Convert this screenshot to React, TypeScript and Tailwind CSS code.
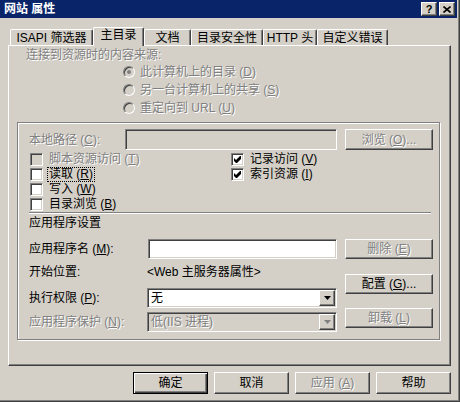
import React from 'react';

const raised =
  'border border-t-white border-l-white border-r-[#404040] border-b-[#404040] shadow-[inset_-1px_-1px_0_#808080]';
const sunken =
  'border border-t-[#808080] border-l-[#808080] border-r-white border-b-white shadow-[inset_1px_1px_0_#404040,inset_-1px_-1px_0_#d4d0c8]';
const grayText = 'text-[#808080] [text-shadow:1px_1px_0_#ffffff]';

// mnemonic letter, underlined
const M = ({ c }: { c: string }) => <span className="underline underline-offset-[1px]">{c}</span>;

const TitleBtn = ({ children, className = '' }: { children: React.ReactNode; className?: string }) => (
  <div
    className={`w-[16px] h-[14px] bg-[#d4d0c8] flex items-center justify-center ${raised} ${className}`}
  >
    {children}
  </div>
);

const Tab = ({ label, w, active }: { label: string; w: string; active?: boolean }) =>
  active ? (
    <div
      className={`${w} relative -mb-px h-[19px] bg-[#d4d0c8] rounded-t-[2px] border-t border-l border-r border-t-white border-l-white border-r-[#404040] shadow-[inset_-1px_0_0_#808080] text-center leading-[14px]`}
    >
      {label}
    </div>
  ) : (
    <div
      className={`${w} h-[16px] rounded-t-[2px] border-t border-l border-r border-t-white border-l-white border-r-[#404040] shadow-[inset_-1px_0_0_#808080] text-center leading-[14px] pt-px`}
    >
      {label}
    </div>
  );

const Btn = ({
  children,
  disabled,
  isDefault,
  className = '',
}: {
  children: React.ReactNode;
  disabled?: boolean;
  isDefault?: boolean;
  className?: string;
}) => (
  <div
    className={`bg-[#d4d0c8] flex items-center justify-center ${
      isDefault
        ? 'border border-black shadow-[inset_1px_1px_0_#ffffff,inset_-1px_-1px_0_#404040,inset_-2px_-2px_0_#808080]'
        : raised
    } ${disabled ? grayText : ''} ${className}`}
  >
    {children}
  </div>
);

const Radio = ({ checked }: { checked?: boolean }) => (
  <span
    className={`w-[12px] h-[12px] shrink-0 rounded-full bg-[#d4d0c8] flex items-center justify-center ${sunken}`}
  >
    {checked && <span className="w-[4px] h-[4px] rounded-full bg-[#808080]" />}
  </span>
);

const Check = ({ checked, disabled }: { checked?: boolean; disabled?: boolean }) => (
  <span
    className={`w-[13px] h-[13px] shrink-0 flex items-center justify-center ${sunken} ${
      disabled ? 'bg-[#d4d0c8]' : 'bg-white'
    }`}
  >
    {checked && (
      <svg width="7" height="7" viewBox="0 0 7 7">
        <polygon points="0,2 2,4 6,0 7,0 7,3 3,7 2,7 0,5" fill="#000" />
      </svg>
    )}
  </span>
);

const CheckRow = ({
  checked,
  disabled,
  focused,
  children,
}: {
  checked?: boolean;
  disabled?: boolean;
  focused?: boolean;
  children: React.ReactNode;
}) => (
  <div className="h-[15px] flex items-center gap-[4px]">
    <Check checked={checked} disabled={disabled} />
    <span
      className={`leading-[13px] border px-px ${focused ? 'border-dotted border-black' : 'border-transparent'} ${
        disabled ? grayText : ''
      }`}
    >
      {children}
    </span>
  </div>
);

const Combo = ({ value, disabled, w }: { value: string; disabled?: boolean; w: string }) => (
  <div className={`${w} h-[20px] p-px flex items-center ${sunken} ${disabled ? 'bg-[#d4d0c8]' : 'bg-white'}`}>
    <span className={`flex-1 pl-[2px] leading-[16px] ${disabled ? grayText : ''}`}>{value}</span>
    <span className={`w-[16px] h-[16px] bg-[#d4d0c8] flex items-center justify-center ${raised}`}>
      <svg width="7" height="4" viewBox="0 0 7 4">
        <polygon points="0,0 7,0 3.5,4" fill={disabled ? '#808080' : '#000'} />
      </svg>
    </span>
  </div>
);

const App = () => {
  return (
    <div className="w-[460px] h-[402px] overflow-hidden bg-[#d4d0c8] border-r border-b border-[#404040] text-[12px] leading-[16px] text-black [font-family:'Liberation_Sans','Noto_Sans_CJK_SC',sans-serif]">
      <div className="h-full flex flex-col border-r border-b border-[#808080] pr-px">
        {/* title bar */}
        <div className="h-[18px] shrink-0 bg-[#0a246a] flex items-center pl-[4px] pr-[2px]">
          <span className="flex-1 text-white font-bold">网站 属性</span>
          <TitleBtn>
            <span className="font-bold text-[11px] leading-[11px]">?</span>
          </TitleBtn>
          <TitleBtn className="ml-[2px]">
            <svg width="8" height="7" viewBox="0 0 8 7">
              <path d="M0.5 0.5 L7.5 6.5 M7.5 0.5 L0.5 6.5" stroke="#000" strokeWidth="1.6" />
            </svg>
          </TitleBtn>
        </div>

        {/* tabs */}
        <div className="relative z-10 mt-[9px] ml-[10px] h-[18px] flex items-end">
          <Tab label="ISAPI 筛选器" w="w-[83px]" />
          <Tab label="主目录" w="w-[51px]" active />
          <Tab label="文档" w="w-[47px]" />
          <Tab label="目录安全性" w="w-[72px]" />
          <Tab label="HTTP 头" w="w-[54px]" />
          <Tab label="自定义错误" w="w-[71px]" />
        </div>

        {/* tab page */}
        <div className="ml-[8px] w-[443px] h-[321px] shrink-0 flex flex-col border border-t-white border-l-white border-r-[#404040] border-b-[#404040] shadow-[inset_-1px_-1px_0_#808080]">
          <div className={`mt-px pl-[17px] h-[16px] ${grayText}`}>连接到资源时的内容来源:</div>
          <div className="pl-[114px] flex flex-col">
            <div className="h-[18px] flex items-center gap-[5px]">
              <Radio checked />
              <span className={grayText}>
                此计算机上的目录 (<M c="D" />)
              </span>
            </div>
            <div className="h-[18px] flex items-center gap-[5px]">
              <Radio />
              <span className={grayText}>
                另一台计算机上的共享 (<M c="S" />)
              </span>
            </div>
            <div className="h-[18px] flex items-center gap-[5px]">
              <Radio />
              <span className={grayText}>
                重定向到 URL (<M c="U" />)
              </span>
            </div>
          </div>

          {/* group box */}
          <div className="mt-[5px] ml-[8px] w-[423px] h-[218px] flex flex-col border border-[#808080] shadow-[inset_1px_1px_0_#ffffff,1px_1px_0_#ffffff]">
            <div className="mt-[6px] pl-[11px] h-[21px] flex items-center">
              <span className={`w-[96px] ${grayText}`}>
                本地路径 (<M c="C" />):
              </span>
              <div className={`w-[212px] h-[21px] bg-[#d4d0c8] ${sunken}`} />
              <Btn disabled className="ml-[8px] w-[88px] h-[21px]">
                浏览 (<M c="O" />)...
              </Btn>
            </div>

            <div className="mt-[2px] pl-[12px] flex">
              <div className="w-[201px] flex flex-col">
                <CheckRow disabled>
                  脚本资源访问 (<M c="T" />)
                </CheckRow>
                <CheckRow focused>
                  读取 (<M c="R" />)
                </CheckRow>
                <CheckRow>
                  写入 (<M c="W" />)
                </CheckRow>
                <CheckRow>
                  目录浏览 (<M c="B" />)
                </CheckRow>
              </div>
              <div className="flex flex-col">
                <CheckRow checked>
                  记录访问 (<M c="V" />)
                </CheckRow>
                <CheckRow checked>
                  索引资源 (<M c="I" />)
                </CheckRow>
              </div>
            </div>

            <div className="ml-[11px] w-[402px] h-[2px] border-t border-t-[#808080] border-b border-b-white" />
            <div className="mt-px pl-[11px] h-[16px]">应用程序设置</div>

            <div className="mt-[8px] pl-[11px] h-[20px] flex items-center">
              <span className="w-[119px]">
                应用程序名 (<M c="M" />):
              </span>
              <div className={`w-[189px] h-[20px] bg-white ${sunken}`} />
              <Btn disabled className="ml-[8px] w-[88px] h-[20px]">
                删除 (<M c="E" />)
              </Btn>
            </div>

            <div className="pl-[11px] flex">
              <div className="w-[308px] flex flex-col">
                <div className="mt-[5px] h-[16px] flex">
                  <span className="w-[118px]">开始位置:</span>
                  <span>&lt;Web 主服务器属性&gt;</span>
                </div>
                <div className="mt-[8px] h-[20px] flex items-center">
                  <span className="w-[118px]">
                    执行权限 (<M c="P" />):
                  </span>
                  <Combo value="无" w="w-[190px]" />
                </div>
                <div className="mt-[4px] h-[20px] flex items-center">
                  <span className={`w-[118px] ${grayText}`}>
                    应用程序保护 (<M c="N" />):
                  </span>
                  <Combo value="低(IIS 进程)" w="w-[190px]" disabled />
                </div>
              </div>
              <div className="ml-[8px] w-[88px] flex flex-col">
                <Btn className="mt-[15px] h-[20px]">
                  配置 (<M c="G" />)...
                </Btn>
                <Btn disabled className="mt-[14px] h-[20px]">
                  卸载 (<M c="L" />)
                </Btn>
              </div>
            </div>
          </div>
        </div>

        {/* dialog buttons */}
        <div className="mt-[6px] pr-[6px] flex justify-end gap-[6px]">
          <Btn isDefault className="w-[75px] h-[22px]">
            确定
          </Btn>
          <Btn className="w-[75px] h-[22px]">取消</Btn>
          <Btn disabled className="w-[75px] h-[22px]">
            应用 (<M c="A" />)
          </Btn>
          <Btn className="w-[75px] h-[22px]">帮助</Btn>
        </div>
      </div>
    </div>
  );
};

export default App;
